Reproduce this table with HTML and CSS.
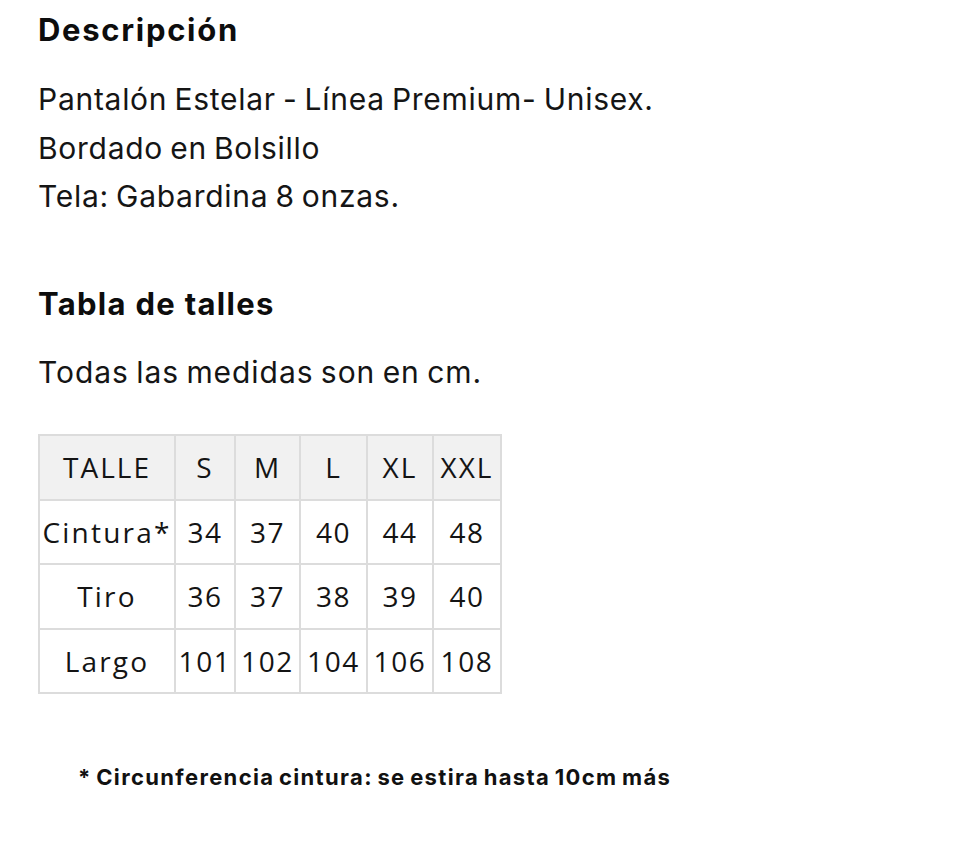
FILE: index.html
```html
<!DOCTYPE html>
<html lang="es">
<head>
<meta charset="utf-8">
<link rel="stylesheet" href="styles.css">
</head>
<body>
<div class="content">
  <h2 class="title title-first">Descripción</h2>
  <p class="desc">Pantalón Estelar - Línea Premium- Unisex.<br>Bordado en Bolsillo<br>Tela: Gabardina 8 onzas.</p>
  <h2 class="title title-second">Tabla de talles</h2>
  <p class="note">Todas las medidas son en cm.</p>
  <table class="sizes">
    <colgroup>
      <col class="col-name">
      <col class="col-s">
      <col class="col-m">
      <col class="col-l">
      <col class="col-xl">
      <col class="col-xxl">
    </colgroup>
    <thead>
      <tr><th>TALLE</th><th>S</th><th>M</th><th>L</th><th>XL</th><th>XXL</th></tr>
    </thead>
    <tbody>
      <tr><td>Cintura*</td><td>34</td><td>37</td><td>40</td><td>44</td><td>48</td></tr>
      <tr><td>Tiro</td><td>36</td><td>37</td><td>38</td><td>39</td><td>40</td></tr>
      <tr><td>Largo</td><td>101</td><td>102</td><td>104</td><td>106</td><td>108</td></tr>
    </tbody>
  </table>
  <p class="footnote">* Circunferencia cintura: se estira hasta 10cm más</p>
</div>
</body>
</html>
```

FILE: styles.css
```css
html, body {
  margin: 0;
  padding: 0;
  background: #ffffff;
}

.content {
  padding: 10px 38px 0 38px;
  font-family: "Inter", "Noto Sans", sans-serif;
  color: #111111;
}

.title {
  margin: 0;
  font-size: 31px;
  line-height: 40px;
  font-weight: 700;
  letter-spacing: 1.3px;
  color: #0d0d0d;
}

.title-first {
  letter-spacing: 1.7px;
}

.title-second {
  margin-top: 63px;
}

.desc,
.note {
  margin: 0;
  font-size: 30px;
  line-height: 48.5px;
  font-weight: 400;
  letter-spacing: 0.72px;
  word-spacing: -2px;
  color: #151515;
}

.desc {
  margin-top: 25px;
}

.note {
  margin-top: 24px;
  letter-spacing: 0.95px;
}

.sizes {
  margin-top: 38px;
  border-collapse: collapse;
  table-layout: fixed;
  width: 462px;
  font-family: "Open Sans", "Noto Sans", sans-serif;
  font-size: 28px;
  color: #141414;
}

.col-name { width: 136px; }
.col-s { width: 60px; }
.col-m { width: 65px; }
.col-l { width: 67px; }
.col-xl { width: 66px; }
.col-xxl { width: 68px; }

.sizes th,
.sizes td {
  border: 2px solid #dcdcdc;
  height: 62.5px;
  padding: 0;
  text-align: center;
  font-weight: 400;
  letter-spacing: 1.6px;
  white-space: nowrap;
  overflow: visible;
}

.sizes thead th {
  background: #f1f1f1;
  letter-spacing: 2px;
}

.sizes td:first-child {
  letter-spacing: 2.2px;
}

.footnote {
  margin: 68px 0 0 40px;
  font-size: 22px;
  line-height: 30px;
  font-weight: 700;
  letter-spacing: 1.35px;
  word-spacing: -2px;
  color: #111111;
}
```
